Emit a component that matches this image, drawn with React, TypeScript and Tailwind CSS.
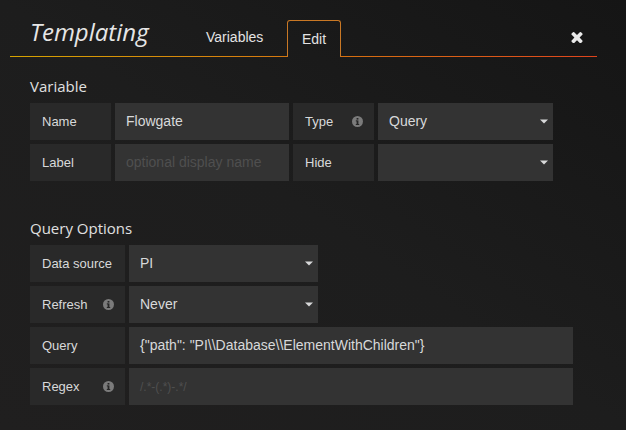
import React from "react";

const Info = () => (
  <svg width="11" height="11" viewBox="0 0 11 11" className="flex-none">
    <circle cx="5.5" cy="5.5" r="5.5" fill="#7b7b7b" />
    <rect x="4.6" y="2" width="1.8" height="1.6" fill="#262626" />
    <rect x="4.6" y="4.4" width="1.8" height="4.6" fill="#262626" />
    <rect x="3.8" y="4.4" width="1.2" height="1" fill="#262626" />
    <rect x="3.8" y="8" width="3.4" height="1" fill="#262626" />
  </svg>
);

const Caret = () => (
  <svg width="8" height="5" viewBox="0 0 8 5" className="flex-none">
    <polygon points="0,0.5 8,0.5 4,4.5" fill="#d8d9da" />
  </svg>
);

const Label = ({ text, w, info }: { text: string; w: string; info?: boolean }) => (
  <div className={`${w} h-[37px] bg-[#292929] flex items-center justify-between pl-[12px] pr-[11px] text-[13px] text-[#d8d9da] flex-none`}>
    <span>{text}</span>
    {info ? <Info /> : null}
  </div>
);

const Field = ({
  w,
  value,
  placeholder,
  select,
  phClass,
}: {
  w: string;
  value?: string;
  placeholder?: string;
  select?: boolean;
  phClass?: string;
}) => (
  <div className={`${w} h-[37px] bg-[#333333] flex items-center justify-between pl-[11px] pr-[5px] flex-none`}>
    {value ? (
      <span className="text-[14px] text-[#d8d9da] whitespace-nowrap">{value}</span>
    ) : (
      <span className={`${phClass ?? "text-[14px]"} text-[#4f4f4f] whitespace-nowrap`}>{placeholder}</span>
    )}
    {select ? <Caret /> : null}
  </div>
);

export default function App() {
  return (
    <div
      className="w-[626px] h-[430px] overflow-hidden bg-linear-to-bl from-[#151515] via-[#1d1d1d] to-[#201f1f]"
      style={{ fontFamily: '"Liberation Sans", Arial, sans-serif' }}
    >
      {/* Header */}
      <div className="ml-[10px] w-[587px] h-[57px] flex">
        <div className="w-[277px] flex flex-col flex-none">
          <div className="flex-1 flex items-start pl-[20px]">
            <div
              className="w-[176px] mt-[20px] text-[24px] leading-[24px] italic text-[#e6e6e6]"
              style={{ fontFamily: '"Open Sans", sans-serif' }}
            >
              Templating
            </div>
            <div className="mt-[30px] text-[14px] leading-[14px] text-[#e3e3e3]">Variables</div>
          </div>
          <div className="h-px bg-linear-to-r from-[#d6a300] to-[#d6780f]" />
        </div>
        <div className="w-[54px] h-[37px] mt-[20px] flex-none border border-b-0 border-[#c97825] rounded-t-[3px] pt-[11px] text-center text-[14px] leading-[14px] text-[#e3e3e3]">
          Edit
        </div>
        <div className="flex-1 flex flex-col">
          <div className="flex-1 flex justify-end items-start pr-[14px]">
            <svg width="12" height="12" viewBox="110 260 1188 1270" className="mt-[31px]">
              <path
                fill="#e9e9e9"
                d="M1298 1322q0 40-28 68l-136 136q-28 28-68 28t-68-28l-294-294-294 294q-28 28-68 28t-68-28l-136-136q-28-28-28-68t28-68l294-294-294-294q-28-28-28-68t28-68l136-136q28-28 68-28t68 28l294 294 294-294q28-28 68-28t68 28l136 136q28 28 28 68t-28 68l-294 294 294 294q28 28 28 68z"
              />
            </svg>
          </div>
          <div className="h-px bg-linear-to-r from-[#d6700f] to-[#df431c]" />
        </div>
      </div>

      {/* Body */}
      <div className="px-[30px]">
        <div
          className="mt-[19px] mb-[7px] text-[15px] leading-[20px] text-[#e0e0e0]"
          style={{ fontFamily: '"Open Sans", sans-serif' }}
        >
          Variable
        </div>
        <div className="flex flex-col gap-[4px]">
          <div className="flex gap-[4px]">
            <Label text="Name" w="w-[81px]" />
            <Field w="w-[174px]" value="Flowgate" />
            <Label text="Type" w="w-[81px]" info />
            <Field w="w-[175px]" value="Query" select />
          </div>
          <div className="flex gap-[4px]">
            <Label text="Label" w="w-[81px]" />
            <Field w="w-[174px]" placeholder="optional display name" />
            <Label text="Hide" w="w-[81px]" />
            <Field w="w-[175px]" select />
          </div>
        </div>

        <div
          className="mt-[37px] mb-[7px] text-[15px] leading-[20px] text-[#e0e0e0]"
          style={{ fontFamily: '"Open Sans", sans-serif' }}
        >
          Query Options
        </div>
        <div className="flex flex-col gap-[4px]">
          <div className="flex gap-[4px]">
            <Label text="Data source" w="w-[95px]" />
            <Field w="w-[189px]" value="PI" select />
          </div>
          <div className="flex gap-[4px]">
            <Label text="Refresh" w="w-[95px]" info />
            <Field w="w-[189px]" value="Never" select />
          </div>
          <div className="flex gap-[4px]">
            <Label text="Query" w="w-[95px]" />
            <Field w="w-[444px]" value={'{"path": "PI\\\\Database\\\\ElementWithChildren"}'} />
          </div>
          <div className="flex gap-[4px]">
            <Label text="Regex" w="w-[95px]" info />
            <Field w="w-[444px]" placeholder="/.*-(.*)-.*/" phClass="text-[12px]" />
          </div>
        </div>
      </div>
    </div>
  );
}
